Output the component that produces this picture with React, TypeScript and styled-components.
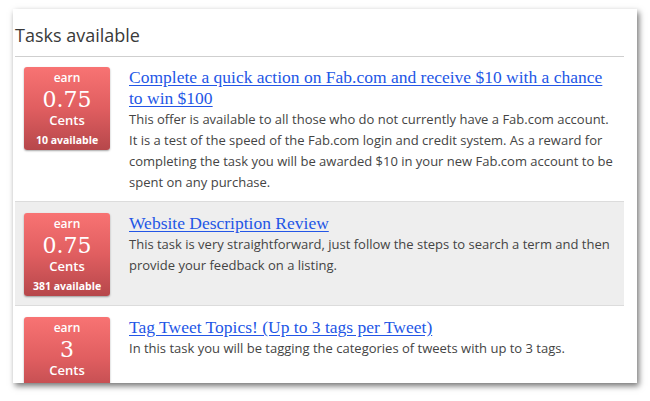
import React from "react";
import styled, { createGlobalStyle } from "styled-components";

const GlobalStyle = createGlobalStyle`
  html, body { margin: 0; padding: 0; background: #ffffff; }
  body { font-family: "Open Sans", sans-serif; }
`;

const Page = styled.div`
  width: 650px;
  height: 401px;
  padding: 9px 0 0 13px;
  box-sizing: border-box;
  overflow: hidden;
`;

const Card = styled.div`
  width: 624px;
  height: 374px;
  background: #ffffff;
  box-shadow: 2px 3px 6px rgba(0, 0, 0, 0.55);
  padding: 0 13px 0 2px;
  box-sizing: border-box;
  overflow: hidden;
`;

const Heading = styled.h2`
  margin: 0;
  padding: 14px 0 9px;
  font-family: "Open Sans", sans-serif;
  font-weight: 400;
  font-size: 18px;
  line-height: 24px;
  color: #3a3a3a;
  border-bottom: 1px solid #cfcfcf;
`;

const Row = styled.div<{ $shaded?: boolean; $first?: boolean }>`
  display: flex;
  align-items: flex-start;
  gap: 19px;
  padding: ${(p) => (p.$first ? "10px" : "11px")} 0 8px 9px;
  background: ${(p) => (p.$shaded ? "#eeeeee" : "#ffffff")};
  border-top: ${(p) => (p.$first ? "none" : "1px solid #dcdcdc")};
`;

const Badge = styled.div`
  flex: 0 0 86px;
  height: 83px;
  margin-bottom: 1px;
  border-radius: 3px;
  background: linear-gradient(to bottom, #f87373 0%, #e05e60 50%, #b6474b 100%);
  box-shadow: 0 1px 2px rgba(0, 0, 0, 0.35);
  color: #ffffff;
  display: flex;
  flex-direction: column;
  align-items: center;
  padding-top: 3px;
  box-sizing: border-box;
  font-family: "Open Sans", sans-serif;
`;

const Earn = styled.span`
  font-size: 12px;
  font-weight: 600;
  line-height: 16px;
`;

const Amount = styled.span`
  font-family: "DejaVu Serif", Georgia, serif;
  font-size: 22px;
  line-height: 26px;
  margin-top: 1px;
`;

const Unit = styled.span`
  font-size: 13px;
  font-weight: 600;
  line-height: 14px;
`;

const Avail = styled.span`
  font-size: 10.5px;
  font-weight: 700;
  line-height: 14px;
  margin-top: 6px;
`;

const Body = styled.div`
  flex: 1;
  padding-right: 6px;
`;

const Title = styled.a`
  display: block;
  font-family: "Liberation Serif", Georgia, serif;
  font-size: 17.5px;
  line-height: 21px;
  color: #2356e6;
  text-decoration: underline;
  text-underline-offset: 2px;
`;

const Desc = styled.p`
  margin: 0;
  font-family: "Open Sans", sans-serif;
  font-size: 13px;
  line-height: 21px;
  color: #444444;
`;

type Task = {
  amount: string;
  available?: string;
  title: string;
  desc: string;
};

const tasks: Task[] = [
  {
    amount: "0.75",
    available: "10 available",
    title:
      "Complete a quick action on Fab.com and receive $10 with a chance to win $100",
    desc:
      "This offer is available to all those who do not currently have a Fab.com account. It is a test of the speed of the Fab.com login and credit system. As a reward for completing the task you will be awarded $10 in your new Fab.com account to be spent on any purchase.",
  },
  {
    amount: "0.75",
    available: "381 available",
    title: "Website Description Review",
    desc:
      "This task is very straightforward, just follow the steps to search a term and then provide your feedback on a listing.",
  },
  {
    amount: "3",
    title: "Tag Tweet Topics! (Up to 3 tags per Tweet)",
    desc: "In this task you will be tagging the categories of tweets with up to 3 tags.",
  },
];

export default function App() {
  return (
    <>
      <GlobalStyle />
      <Page>
        <Card>
          <Heading>Tasks available</Heading>
          {tasks.map((t, i) => (
            <Row key={i} $first={i === 0} $shaded={i === 1}>
              <Badge>
                <Earn>earn</Earn>
                <Amount>{t.amount}</Amount>
                <Unit>Cents</Unit>
                {t.available && <Avail>{t.available}</Avail>}
              </Badge>
              <Body>
                <Title href="#">{t.title}</Title>
                <Desc>{t.desc}</Desc>
              </Body>
            </Row>
          ))}
        </Card>
      </Page>
    </>
  );
}
